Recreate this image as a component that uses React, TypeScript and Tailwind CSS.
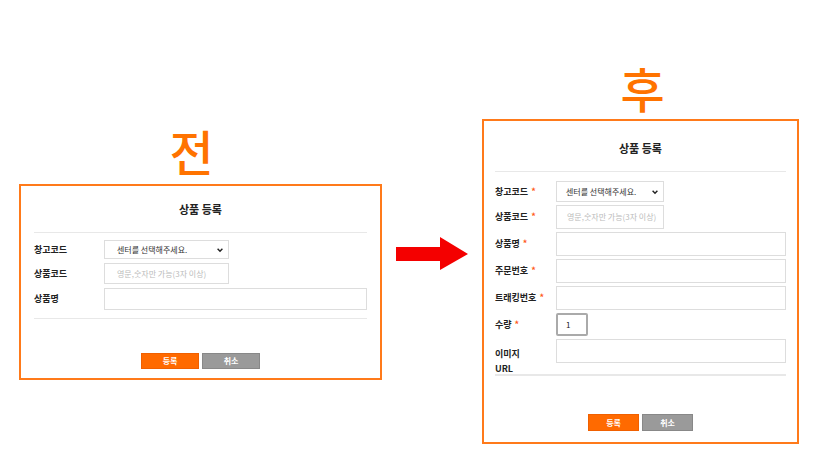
import React from "react";

const font = { fontFamily: '"Noto Sans CJK KR", "Noto Sans", sans-serif' };

const Chevron = () => (
  <svg width="8" height="8" viewBox="0 0 10 10" className="shrink-0">
    <path d="M2 3.5 L5 6.5 L8 3.5" fill="none" stroke="#222" strokeWidth="1.8" />
  </svg>
);

const Star = () => <span className="ml-[3px] text-[#ff5a1a]">*</span>;

const Buttons = ({ w, h }: { w: string; h: string }) => (
  <div className="flex justify-center gap-[3px]">
    <button className={`${w} ${h} bg-[#ff6a00] border border-[#f06000] text-white text-[8px] font-bold`}>등록</button>
    <button className={`${w} ${h} bg-[#9a9a9a] border border-[#888] text-white text-[8px] font-bold`}>취소</button>
  </div>
);

const BeforePanel = () => (
  <div className="w-[363px] h-[196px] border-2 border-[#ff7a1a] bg-white flex flex-col px-[13px]">
    <h3 className="mt-[16px] h-[14px] text-center text-[11px] leading-[14px] font-bold text-[#222]">상품 등록</h3>
    <div className="mt-[16px] h-px bg-[#e8e8e8]" />
    <div className="mt-[7px] flex flex-col gap-[4px] text-[9px] font-bold text-[#222]">
      <div className="flex items-center">
        <span className="w-[70px]">창고코드</span>
        <div className="w-[125px] h-[19px] border border-[#ddd] flex items-center justify-between pl-[12px] pr-[4px] font-normal text-[8px] text-[#333]">
          <span>센터를 선택해주세요.</span>
          <Chevron />
        </div>
      </div>
      <div className="flex items-center">
        <span className="w-[70px]">상품코드</span>
        <div className="w-[125px] h-[21px] border border-[#ddd] flex items-center pl-[12px] font-normal text-[8px] text-[#bbb]">
          영문,숫자만 가능(3자 이상)
        </div>
      </div>
      <div className="flex items-center">
        <span className="w-[70px]">상품명</span>
        <div className="flex-1 h-[22px] border border-[#ddd]" />
      </div>
    </div>
    <div className="mt-[8px] h-px bg-[#e8e8e8]" />
    <div className="mt-[34px]">
      <Buttons w="w-[58px]" h="h-[16px]" />
    </div>
  </div>
);

const Field = ({ label, w, children }: { label: React.ReactNode; w?: string; children?: React.ReactNode }) => (
  <div className="flex items-center">
    <span className="w-[61px] leading-[12px]">{label}</span>
    <div className={`${w ?? "flex-1"} h-[24px] border border-[#ddd] flex items-center`}>{children}</div>
  </div>
);

const AfterPanel = () => (
  <div className="w-[317px] h-[325px] border-2 border-[#ff7a1a] bg-white flex flex-col px-[11px]">
    <h3 className="mt-[20px] h-[14px] text-center text-[11px] leading-[14px] font-bold text-[#222]">상품 등록</h3>
    <div className="mt-[16px] h-px bg-[#e8e8e8]" />
    <div className="mt-[9px] flex flex-col gap-[3px] text-[9px] font-bold text-[#222]">
      <div className="flex items-center">
        <span className="w-[61px]">창고코드<Star /></span>
        <div className="w-[108px] h-[21px] border border-[#ddd] flex items-center justify-between pl-[9px] pr-[4px] font-normal text-[8px] text-[#333]">
          <span>센터를 선택해주세요.</span>
          <Chevron />
        </div>
      </div>
      <Field label={<>상품코드<Star /></>} w="w-[108px]">
        <span className="pl-[10px] font-normal text-[8px] text-[#bbb]">영문,숫자만 가능(3자 이상)</span>
      </Field>
      <Field label={<>상품명<Star /></>} />
      <Field label={<>주문번호<Star /></>} />
      <Field label={<>트래킹번호<Star /></>} />
      <div className="flex items-center">
        <span className="w-[61px]">수량<Star /></span>
        <div className="w-[32px] h-[23px] border-2 border-[#aaa] rounded-[2px] flex items-center pl-[8px] font-normal text-[8px] text-[#222]">1</div>
      </div>
      <div className="flex items-start">
        <span className="w-[61px] mt-[7px] leading-[15px]">이미지<br />URL</span>
        <div className="flex-1 h-[24px] border border-[#ddd]" />
      </div>
    </div>
    <div className="-mt-[2px] h-[2px] bg-[#e8e8e8]" />
    <div className="mt-[38px]">
      <Buttons w="w-[51px]" h="h-[17px]" />
    </div>
  </div>
);

export default function App() {
  return (
    <div className="w-[820px] h-[469px] bg-white flex overflow-hidden" style={font}>
      <div className="ml-[19px] mt-[120px] flex flex-col">
        <div className="h-[64px] -mt-[2px] mb-[2px] pr-[18px] text-center text-[48px] leading-[64px] font-medium text-[#ff7300]">전</div>
        <BeforePanel />
      </div>
      <div className="ml-[14px] mt-[237px]">
        <svg width="73" height="34" viewBox="0 0 73 34">
          <polygon points="0,10 44,10 44,0 72,17 44,33 44,24 0,24" fill="#f40000" />
        </svg>
      </div>
      <div className="ml-[13px] mt-[55px] flex flex-col">
        <div className="h-[64px] pl-[4px] text-center text-[48px] leading-[64px] font-medium text-[#ff7300]">후</div>
        <AfterPanel />
      </div>
    </div>
  );
}
